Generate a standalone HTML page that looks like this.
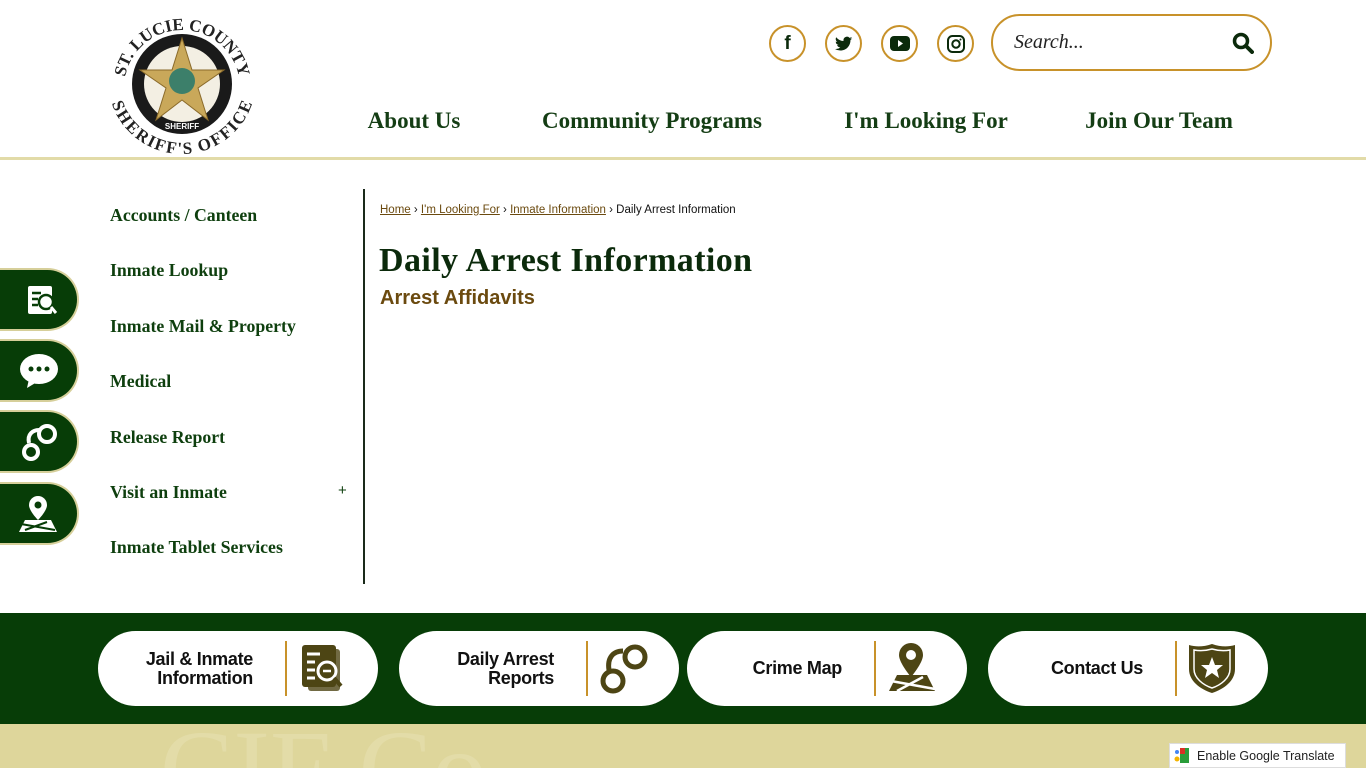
<!DOCTYPE html>
<html><head><meta charset="utf-8"><style>
*{margin:0;padding:0;box-sizing:border-box}
html,body{width:1366px;height:768px;overflow:hidden}
body{background:#fff;font-family:"Liberation Sans",sans-serif;position:relative}
.abs{position:absolute}
.serif{font-family:"Liberation Serif","DejaVu Serif",serif}
.hdrline{left:0;top:157px;width:1366px;height:3px;background:#e2dba8}
.soc{width:37px;height:37px;border:2px solid #c8922a;border-radius:50%;top:25px;display:flex;align-items:center;justify-content:center}
.search{left:991px;top:14px;width:281px;height:57px;border:2px solid #c8922a;border-radius:29px}
.nav{top:108px;font-size:23px;color:#143d14;font-weight:bold;white-space:nowrap;transform:translateX(-50%)}
.side{left:110px;font-size:17.8px;color:#0e3f0e;font-weight:bold;font-family:"Liberation Serif",serif}
.tab{left:-20px;width:99px;height:63px;background:#073d07;border:2px solid #d6cf9a;border-left:none;border-radius:0 32px 32px 0;display:flex;align-items:center;justify-content:flex-end;padding-right:18px}
.foot{left:0;top:613px;width:1366px;height:111px;background:#073d07}
.tan{left:0;top:724px;width:1366px;height:44px;background:#ded69b;overflow:hidden}
.btn{top:631px;width:280px;height:75px;background:#fff;border-radius:38px}
.btn .t{position:absolute;right:125px;top:0;height:75px;display:flex;align-items:center;text-align:right;font-weight:bold;font-size:18px;line-height:19px;color:#111;letter-spacing:-0.3px}
.btn .d{position:absolute;left:187px;top:10px;width:2px;height:55px;background:#c8922a}
.btn svg{position:absolute;left:200px;top:10px}
</style></head><body>
<!-- logo -->
<svg class="abs" style="left:110px;top:4px" width="144" height="152" viewBox="0 -4 144 152">
<defs>
<path id="tp" d="M14,80 A58,58 0 0 1 130,80"/>
<path id="bp" d="M10,72 A62,62 0 0 0 134,72"/>
</defs>
<circle cx="72" cy="76" r="50" fill="#1a1a1a"/>
<circle cx="72" cy="76" r="38" fill="#f3efe3"/>
<polygon points="72,30 82,62 114,62 88,80 98,112 72,92 46,112 56,80 30,62 62,62" fill="#c9a85a" stroke="#8a6a2a"/>
<circle cx="72" cy="73" r="13" fill="#3c7f6a"/>
<text font-family="Liberation Serif" font-weight="bold" font-size="17" fill="#222"><textPath href="#tp" startOffset="50%" text-anchor="middle">ST. LUCIE COUNTY</textPath></text>
<text font-family="Liberation Serif" font-weight="bold" font-size="17" fill="#222" dy="12"><textPath href="#bp" startOffset="50%" text-anchor="middle">SHERIFF'S OFFICE</textPath></text>
<text x="72" y="121" text-anchor="middle" font-weight="bold" font-size="8" fill="#fff">SHERIFF</text>
</svg>
<div class="abs hdrline"></div>
<!-- social -->
<div class="abs soc" style="left:769px"><span style="font-weight:bold;font-size:19px;color:#0b2a0b">f</span></div>
<div class="abs soc" style="left:825px"><svg width="18" height="16" viewBox="0 0 24 20"><path d="M23 2.5a9 9 0 0 1-2.7.8A4.7 4.7 0 0 0 22.4.7a9 9 0 0 1-3 1.1A4.7 4.7 0 0 0 11.4 6 13.3 13.3 0 0 1 1.6 1a4.7 4.7 0 0 0 1.5 6.3 4.6 4.6 0 0 1-2.1-.6 4.7 4.7 0 0 0 3.8 4.6 4.7 4.7 0 0 1-2.1.1 4.7 4.7 0 0 0 4.4 3.2A9.4 9.4 0 0 1 0 16.6 13.3 13.3 0 0 0 7.2 18.7c8.6 0 13.4-7.2 13.4-13.4v-.6A9.5 9.5 0 0 0 23 2.5z" fill="#0b2a0b"/></svg></div>
<div class="abs soc" style="left:881px"><svg width="20" height="15" viewBox="0 0 20 15"><rect width="20" height="15" rx="4" fill="#0b2a0b"/><polygon points="8,4 13,7.5 8,11" fill="#fff"/></svg></div>
<div class="abs soc" style="left:937px"><svg width="18" height="18" viewBox="0 0 18 18"><rect x="1" y="1" width="16" height="16" rx="4.5" fill="none" stroke="#0b2a0b" stroke-width="2"/><circle cx="9" cy="9" r="3.7" fill="none" stroke="#0b2a0b" stroke-width="2"/><circle cx="13.5" cy="4.5" r="1" fill="#0b2a0b"/></svg></div>
<div class="abs search"><span class="abs serif" style="left:21px;top:15px;font-style:italic;font-size:20px;color:#222">Search...</span>
<svg class="abs" style="left:239px;top:16px" width="22" height="22" viewBox="0 0 22 22"><circle cx="9" cy="9" r="6.5" fill="none" stroke="#0b2a0b" stroke-width="3.5"/><line x1="14" y1="14" x2="20" y2="20" stroke="#0b2a0b" stroke-width="4" stroke-linecap="round"/></svg></div>
<!-- nav -->
<div class="abs nav serif" style="left:414px">About Us</div>
<div class="abs nav serif" style="left:652px">Community Programs</div>
<div class="abs nav serif" style="left:926px">I'm Looking For</div>
<div class="abs nav serif" style="left:1159px">Join Our Team</div>
<!-- sidebar -->
<div class="abs side" style="top:205px">Accounts / Canteen</div>
<div class="abs side" style="top:260px">Inmate Lookup</div>
<div class="abs side" style="top:316px">Inmate Mail &amp; Property</div>
<div class="abs side" style="top:371px">Medical</div>
<div class="abs side" style="top:427px">Release Report</div>
<div class="abs side" style="top:482px">Visit an Inmate</div>
<div class="abs" style="left:338px;top:482px;font-size:15px;color:#0e3f0e">+</div>
<div class="abs side" style="top:537px">Inmate Tablet Services</div>
<div class="abs" style="left:363px;top:189px;width:2px;height:395px;background:#1a2a1a"></div>
<!-- tabs -->
<div class="abs tab" style="top:268px"><svg width="34" height="34" viewBox="0 0 34 34"><rect x="3" y="3" width="24" height="28" rx="2" fill="#fff"/><g stroke="#073d07" stroke-width="2.5"><line x1="7" y1="10" x2="16" y2="10"/><line x1="7" y1="16" x2="13" y2="16"/><line x1="7" y1="22" x2="13" y2="22"/></g><circle cx="21" cy="19" r="7" fill="#fff" stroke="#073d07" stroke-width="2.5"/><line x1="26" y1="24" x2="31" y2="30" stroke="#fff" stroke-width="3"/></svg></div>
<div class="abs tab" style="top:339px"><svg width="40" height="36" viewBox="0 0 40 36"><ellipse cx="20" cy="16" rx="19" ry="15" fill="#fff"/><polygon points="10,26 8,35 18,29" fill="#fff"/><circle cx="12" cy="16" r="2.5" fill="#073d07"/><circle cx="20" cy="16" r="2.5" fill="#073d07"/><circle cx="28" cy="16" r="2.5" fill="#073d07"/></svg></div>
<div class="abs tab" style="top:410px"><svg width="38" height="40" viewBox="0 0 38 40"><circle cx="26" cy="12" r="8" fill="none" stroke="#fff" stroke-width="4"/><circle cx="10" cy="30" r="7" fill="none" stroke="#fff" stroke-width="4"/><path d="M8 21 C6 12 12 8 18 8" fill="none" stroke="#fff" stroke-width="4"/></svg></div>
<div class="abs tab" style="top:482px"><svg width="42" height="40" viewBox="0 0 42 40"><path d="M21 2a9 9 0 0 1 9 9c0 6-9 15-9 15s-9-9-9-15a9 9 0 0 1 9-9z" fill="#fff"/><circle cx="21" cy="11" r="3.5" fill="#073d07"/><polygon points="2,38 8,26 34,26 40,38" fill="#fff"/><path d="M4 30 L38 36 M8 36 L30 28" stroke="#073d07" stroke-width="2"/></svg></div>
<!-- content -->
<div class="abs" style="left:380px;top:204px;font-size:11.5px;color:#111;white-space:nowrap"><span style="color:#6b4a0f;text-decoration:underline">Home</span> › <span style="color:#6b4a0f;text-decoration:underline">I'm Looking For</span> › <span style="color:#6b4a0f;text-decoration:underline">Inmate Information</span> › Daily Arrest Information</div>
<div class="abs serif" style="left:379px;top:242px;font-size:34px;font-weight:bold;color:#0b2a0b;white-space:nowrap;letter-spacing:0.4px">Daily Arrest Information</div>
<div class="abs" style="left:380px;top:287px;font-size:20px;font-weight:bold;color:#6b4a0f">Arrest Affidavits</div>
<!-- footer -->
<div class="abs foot"></div>
<div class="abs tan"><div class="serif" style="position:absolute;left:160px;top:-10px;font-size:110px;line-height:110px;color:#e3dca8;white-space:nowrap">CIF Co</div></div>
<div class="abs btn" style="left:98px"><div class="t">Jail &amp; Inmate<br>Information</div><div class="d"></div>
<svg width="48" height="54" viewBox="0 0 48 54"><rect x="4" y="4" width="34" height="42" rx="3" fill="#4d4514"/><rect x="10" y="8" width="32" height="42" rx="3" fill="#4d4514" opacity=".8"/><g stroke="#fff" stroke-width="3"><line x1="9" y1="13" x2="22" y2="13"/><line x1="9" y1="21" x2="17" y2="21"/><line x1="9" y1="29" x2="17" y2="29"/><line x1="9" y1="37" x2="17" y2="37"/></g><circle cx="29" cy="30" r="9" fill="#4d4514" stroke="#fff" stroke-width="3"/><line x1="25" y1="30" x2="33" y2="30" stroke="#fff" stroke-width="2.5"/><line x1="36" y1="37" x2="43" y2="45" stroke="#4d4514" stroke-width="4"/></svg></div>
<div class="abs btn" style="left:399px"><div class="t">Daily Arrest<br>Reports</div><div class="d"></div>
<svg width="52" height="56" viewBox="0 0 52 56"><circle cx="36" cy="16" r="10" fill="none" stroke="#4d4514" stroke-width="5"/><circle cx="14" cy="40" r="10" fill="none" stroke="#4d4514" stroke-width="5"/><path d="M10 29 C8 17 14 10 24 10" fill="none" stroke="#4d4514" stroke-width="5"/></svg></div>
<div class="abs btn" style="left:687px"><div class="t">Crime Map</div><div class="d"></div>
<svg width="52" height="56" viewBox="0 0 52 56"><path d="M24 2a12 12 0 0 1 12 12c0 8-12 22-12 22S12 22 12 14A12 12 0 0 1 24 2z" fill="#4d4514"/><circle cx="24" cy="14" r="5" fill="#fff"/><polygon points="2,50 10,34 40,34 48,50" fill="#4d4514"/><path d="M4 40 L48 48 M10 50 L36 36" stroke="#fff" stroke-width="2.5"/></svg></div>
<div class="abs btn" style="left:988px"><div class="t">Contact Us</div><div class="d"></div>
<svg width="52" height="56" viewBox="0 0 52 56"><path d="M24 3 C33 6 40 6 47 4 L47 28 C47 40 36 48 24 52 C12 48 1 40 1 28 L1 4 C8 6 15 6 24 3z" fill="#4d4514"/><path d="M24 8 C31 10 37 10 42 9 L42 28 C42 37 33 44 24 47 C15 44 6 37 6 28 L6 9 C11 10 17 10 24 8z" fill="none" stroke="#fff" stroke-width="1.5"/><polygon points="24,16 27,24 35,24 29,29 31,37 24,32 17,37 19,29 13,24 21,24" fill="#fff"/></svg></div>
<div class="abs" style="left:1169px;top:743px;width:177px;height:25px;background:#fff;border:1px solid #ddd;font-size:12.5px;color:#222;display:flex;align-items:center;padding-left:4px;white-space:nowrap">
<svg width="16" height="17" viewBox="0 0 16 17" style="margin-right:7px;flex:none"><rect x="6" y="1" width="9" height="15" fill="#2a9d3a"/><rect x="6" y="1" width="5" height="6" fill="#d93025"/><circle cx="3" cy="5" r="2" fill="#4285f4"/><circle cx="3" cy="12" r="2.5" fill="#f4b400"/></svg>Enable Google Translate</div>
</body></html>
